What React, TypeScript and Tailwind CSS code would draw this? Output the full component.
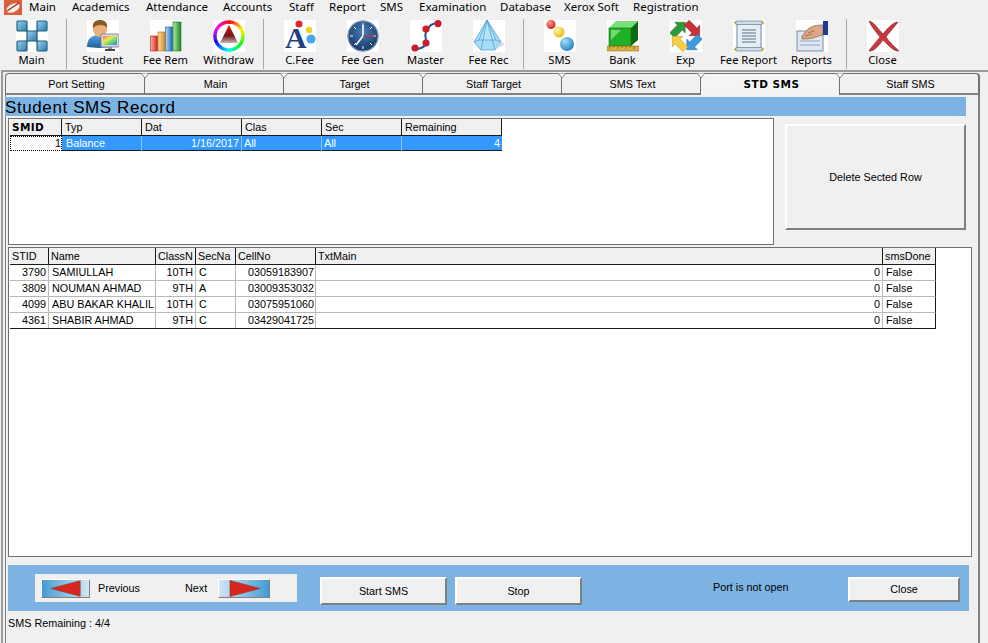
import React from "react";

const Box = ({ children }: { children: React.ReactNode }) => (
  <svg width="32" height="32" viewBox="0 0 32 32" className="block bg-white">
    {children}
  </svg>
);

const Sq = ({ x, y }: { x: number; y: number }) => (
  <rect x={x} y={y} width="10" height="10" rx="1" fill="url(#mainG)" stroke="#1d5f86" strokeWidth="1.2" />
);

const IconMain = () => (
  <Box>
    <defs>
      <linearGradient id="mainG" x1="0" y1="0" x2="1" y2="1">
        <stop offset="0" stopColor="#9fd0ea" />
        <stop offset="1" stopColor="#2a7ba8" />
      </linearGradient>
    </defs>
    <path d="M6 6L26 26M26 6L6 26" stroke="#8fb7cf" strokeWidth="3" />
    <Sq x={1} y={1} />
    <Sq x={21} y={1} />
    <Sq x={11} y={11} />
    <Sq x={1} y={21} />
    <Sq x={21} y={21} />
  </Box>
);

const IconStudent = () => (
  <Box>
    <defs>
      <linearGradient id="stuB" x1="0" y1="0" x2="0" y2="1">
        <stop offset="0" stopColor="#5aa5de" />
        <stop offset="1" stopColor="#1c5f9f" />
      </linearGradient>
      <linearGradient id="stuS" x1="0" y1="0" x2="1" y2="1">
        <stop offset="0" stopColor="#ff6a5a" />
        <stop offset="0.35" stopColor="#f5e84c" />
        <stop offset="0.65" stopColor="#57d87a" />
        <stop offset="1" stopColor="#5a6be0" />
      </linearGradient>
    </defs>
    <path d="M0 27C0 18 5 15 13 15C20 15 24 18 24 27L12 28Z" fill="url(#stuB)" />
    <ellipse cx="13" cy="9" rx="7" ry="8" fill="#e9b07c" />
    <path d="M6 8C5 2 9 0 13 0C18 0 21 3 20 8C18 4 10 4 6 8Z" fill="#8a5a2c" />
    <rect x="14" y="14" width="18" height="13" rx="1" fill="#d5dade" stroke="#6d7680" strokeWidth="0.8" />
    <rect x="16" y="16" width="14" height="9" fill="url(#stuS)" />
    <rect x="21" y="27" width="4" height="2" fill="#8b929a" />
    <rect x="18" y="29" width="10" height="2" fill="#40464c" />
  </Box>
);

const IconFeeRem = () => (
  <Box>
    <defs>
      <linearGradient id="b1" x1="0" x2="1" y1="0" y2="0"><stop offset="0" stopColor="#f6b4a8" /><stop offset="1" stopColor="#c8261c" /></linearGradient>
      <linearGradient id="b2" x1="0" x2="1" y1="0" y2="0"><stop offset="0" stopColor="#fbdca0" /><stop offset="1" stopColor="#e08a14" /></linearGradient>
      <linearGradient id="b3" x1="0" x2="1" y1="0" y2="0"><stop offset="0" stopColor="#b5dcf6" /><stop offset="1" stopColor="#1a67b8" /></linearGradient>
      <linearGradient id="b4" x1="0" x2="1" y1="0" y2="0"><stop offset="0" stopColor="#b8eaa8" /><stop offset="1" stopColor="#158a24" /></linearGradient>
    </defs>
    <rect x="0.5" y="16" width="7" height="15" fill="url(#b1)" stroke="#a3201a" strokeWidth="0.6" />
    <rect x="8" y="12" width="7" height="19" fill="url(#b2)" stroke="#b66f10" strokeWidth="0.6" />
    <rect x="15.5" y="7" width="7" height="24" fill="url(#b3)" stroke="#14508f" strokeWidth="0.6" />
    <rect x="23" y="2" width="8" height="29" fill="url(#b4)" stroke="#0f6c1b" strokeWidth="0.6" />
  </Box>
);

const hueSegs = Array.from({ length: 36 }, (_, i) => {
  const a0 = ((i * 10 - 91) * Math.PI) / 180;
  const a1 = (((i + 1) * 10 - 90) * Math.PI) / 180;
  const r = 14;
  return {
    d: `M${16 + r * Math.cos(a0)} ${16 + r * Math.sin(a0)}A${r} ${r} 0 0 1 ${16 + r * Math.cos(a1)} ${16 + r * Math.sin(a1)}`,
    c: `hsl(${i * 10},95%,50%)`,
  };
});

const IconWithdraw = () => (
  <Box>
    <defs>
      <linearGradient id="triG" x1="0" y1="0" x2="0" y2="1">
        <stop offset="0" stopColor="#e01010" />
        <stop offset="0.6" stopColor="#701818" />
        <stop offset="1" stopColor="#c8b8b8" />
      </linearGradient>
    </defs>
    {hueSegs.map((s, i) => (
      <path key={i} d={s.d} fill="none" stroke={s.c} strokeWidth="3.4" />
    ))}
    <path d="M16 5L25 23H7Z" fill="url(#triG)" />
  </Box>
);

const IconCFee = () => (
  <Box>
    <text x="1" y="28" fontFamily="'Liberation Serif', serif" fontWeight="700" fontSize="30" fill="#1f3f80">A</text>
    <circle cx="15" cy="4" r="3.5" fill="#e02828" />
    <circle cx="25" cy="10" r="3.2" fill="#f2d022" />
    <circle cx="27" cy="19" r="4.6" fill="#48a8e8" />
  </Box>
);

const IconFeeGen = () => (
  <Box>
    <defs>
      <radialGradient id="clk" cx="0.5" cy="0.35" r="0.7">
        <stop offset="0" stopColor="#4a7db8" />
        <stop offset="1" stopColor="#10305f" />
      </radialGradient>
    </defs>
    <circle cx="16" cy="16" r="15.5" fill="url(#clk)" />
    <circle cx="16" cy="16" r="15" fill="none" stroke="#9db0c4" strokeWidth="0.8" />
    <g stroke="#ffffff" strokeWidth="1">
      <path d="M16 3V6M16 26V29M3 16H6M26 16H29M7 7L9 9M25 7L23 9M7 25L9 23M25 25L23 23" />
    </g>
    <path d="M16 16V5M16 16L9 25" stroke="#ffffff" strokeWidth="1.6" />
    <path d="M16 16H28" stroke="#d83030" strokeWidth="1" />
  </Box>
);

const IconMaster = () => (
  <Box>
    <path d="M29 3C18 3 18 10 16 12C14 16 17 20 16 24C14 28 8 29 4 29" fill="none" stroke="#1f55a8" strokeWidth="2" />
    <circle cx="28" cy="3.6" r="3.6" fill="#c81e2a" />
    <circle cx="16" cy="9" r="3.6" fill="#c81e2a" />
    <circle cx="16" cy="23" r="3.6" fill="#c81e2a" />
    <circle cx="5" cy="28" r="3.6" fill="#c81e2a" />
  </Box>
);

const IconFeeRec = () => (
  <Box>
    <path d="M14 0L1 22L8 30H22L28 22Z" fill="#a9dcf5" stroke="#4ea3d8" strokeWidth="0.8" />
    <path d="M14 0L8 30M14 0L22 30M14 0L6 20H23L14 0" fill="#c8ecfb" fillOpacity="0.5" stroke="#4ea3d8" strokeWidth="0.8" />
    <path d="M1 22L6 20M28 22L23 20" stroke="#4ea3d8" strokeWidth="0.8" />
    <path d="M22 30L32 24L28 22Z" fill="#d8dde0" />
  </Box>
);

const IconSMS = () => (
  <Box>
    <defs>
      <radialGradient id="bR" cx="0.35" cy="0.3" r="0.8"><stop offset="0" stopColor="#ff9a8a" /><stop offset="1" stopColor="#c81818" /></radialGradient>
      <radialGradient id="bY" cx="0.35" cy="0.3" r="0.8"><stop offset="0" stopColor="#fff49a" /><stop offset="1" stopColor="#e8b408" /></radialGradient>
      <radialGradient id="bB" cx="0.35" cy="0.3" r="0.8"><stop offset="0" stopColor="#a8dcf8" /><stop offset="1" stopColor="#1878c0" /></radialGradient>
    </defs>
    <circle cx="7" cy="4.5" r="4.5" fill="url(#bR)" />
    <circle cx="15" cy="12" r="5.5" fill="url(#bY)" />
    <circle cx="23" cy="24" r="7" fill="url(#bB)" />
  </Box>
);

const IconBank = () => (
  <Box>
    <path d="M2 8L9 1H31L24 8Z" fill="#78e078" />
    <path d="M24 8L31 1V20L24 26Z" fill="#0a6a14" />
    <rect x="2" y="8" width="22" height="18" fill="#20b028" stroke="#0d6a16" strokeWidth="0.6" />
    <path d="M4 10H14L4 20Z" fill="#70dc70" />
    <rect x="0" y="26" width="32" height="5" fill="#d8b040" stroke="#8d6f18" strokeWidth="0.6" />
    <path d="M3 26V29M7 26V28M11 26V29M15 26V28M19 26V29M23 26V28M27 26V29" stroke="#6f5710" strokeWidth="0.7" />
  </Box>
);

const arrowD = "M0 -9.5L7.5 -2H3.5V9H-3.5V-2H-7.5Z";

const IconExp = () => (
  <Box>
    <path d={arrowD} transform="translate(8.5 9) rotate(45)" fill="#2f9a3a" stroke="#1e6a28" strokeWidth="0.5" />
    <path d={arrowD} transform="translate(23 9) rotate(135)" fill="#c8323a" stroke="#8e1f26" strokeWidth="0.5" />
    <path d={arrowD} transform="translate(23.5 23) rotate(225)" fill="#3d9ae0" stroke="#20689f" strokeWidth="0.5" />
    <path d={arrowD} transform="translate(9 23) rotate(-45)" fill="#f4d040" stroke="#b89a1c" strokeWidth="0.5" />
  </Box>
);

const IconFeeReport = () => (
  <Box>
    <rect x="4" y="3" width="24" height="26" fill="#e6eef6" stroke="#6d8aa6" strokeWidth="1" />
    <rect x="2" y="1" width="28" height="3.5" rx="1.7" fill="#cfdbe6" stroke="#6d8aa6" strokeWidth="0.8" />
    <rect x="2" y="27.5" width="28" height="3.5" rx="1.7" fill="#cfdbe6" stroke="#6d8aa6" strokeWidth="0.8" />
    <circle cx="2.5" cy="2.6" r="1.3" fill="#c8a83a" />
    <circle cx="29.5" cy="2.6" r="1.3" fill="#c8a83a" />
    <circle cx="2.5" cy="29.4" r="1.3" fill="#c8a83a" />
    <circle cx="29.5" cy="29.4" r="1.3" fill="#c8a83a" />
    <path d="M9 10H23M9 13H23M9 16H23M9 19H23M9 22H23" stroke="#5a7086" strokeWidth="1" />
  </Box>
);

const IconReports = () => (
  <Box>
    <rect x="1" y="11" width="26" height="20" fill="#dfe8f2" stroke="#6a7f96" strokeWidth="0.9" />
    <path d="M4 21H24M4 25H24" stroke="#8fa4ba" strokeWidth="1" />
    <path d="M6 16L12 9C16 6 20 5 27 5L27 15C22 16 20 17 17 18C13 19 10 19 6 19Z" fill="#d8a888" stroke="#8f6040" strokeWidth="0.7" />
    <path d="M12 13L18 11M9 16L16 14" stroke="#8f6040" strokeWidth="0.7" />
    <rect x="27" y="1" width="5" height="14" fill="#1c3c94" />
  </Box>
);

const IconClose = () => (
  <Box>
    <path d="M2 1C6 1 12 10 16 14C20 9 26 2 31 2C28 6 22 13 19 17C22 22 28 27 32 31C27 32 20 24 16 20C12 25 7 32 2 31C5 26 11 20 13 17C9 12 4 6 2 1Z" fill="#c8383c" stroke="#7e1e20" strokeWidth="0.6" />
  </Box>
);

const menus: [string, string][] = [
  ["Main", "w-[43px]"],
  ["Academics", "w-[74px]"],
  ["Attendance", "w-[77px]"],
  ["Accounts", "w-[66px]"],
  ["Staff", "w-[40px]"],
  ["Report", "w-[51px]"],
  ["SMS", "w-[39px]"],
  ["Examination", "w-[81px]"],
  ["Database", "w-[64px]"],
  ["Xerox Soft", "w-[69px]"],
  ["Registration", "w-[70px]"],
];

const tools: ([string, React.ReactNode] | "sep")[] = [
  ["Main", <IconMain />],
  "sep",
  ["Student", <IconStudent />],
  ["Fee Rem", <IconFeeRem />],
  ["Withdraw", <IconWithdraw />],
  "sep",
  ["C.Fee", <IconCFee />],
  ["Fee Gen", <IconFeeGen />],
  ["Master", <IconMaster />],
  ["Fee Rec", <IconFeeRec />],
  "sep",
  ["SMS", <IconSMS />],
  ["Bank", <IconBank />],
  ["Exp", <IconExp />],
  ["Fee Report", <IconFeeReport />],
  ["Reports", <IconReports />],
  "sep",
  ["Close", <IconClose />],
];

const tabs = ["Port Setting", "Main", "Target", "Staff Target", "SMS Text", "STD SMS", "Staff SMS"];

const g1Cols = "grid grid-cols-[52px_80px_100px_80px_80px_100px] w-[492px]";
const g2Cols = "grid grid-cols-[39px_107px_40px_40px_80px_567px_53px] w-[926px]";

const HCell = ({ children, className = "" }: { children: React.ReactNode; className?: string }) => (
  <div className={`h-[16px] bg-[#f0f0f0] border-r border-[#1a1a1a] px-[2px] leading-[16px] whitespace-nowrap overflow-hidden ${className}`}>
    {children}
  </div>
);

const RaisedBtn = ({ label, className }: { label: string; className: string }) => (
  <button className={`flex items-center justify-center shrink-0 bg-[#f0f0f0] border-t-2 border-l-2 border-t-white border-l-white border-r-2 border-b-2 border-r-[#808080] border-b-[#808080] text-[10.8px] text-black ${className}`}>
    {label}
  </button>
);

const ArrowBtn = ({ dir }: { dir: "l" | "r" }) => (
  <div className={`h-[19px] border-t border-l border-white border-r border-b border-r-[#808080] border-b-[#808080] flex items-center shrink-0 ${dir === "l" ? "w-[49px] bg-gradient-to-r from-[#3f9bd3] to-[#cfe6f7]" : "w-[52px] bg-gradient-to-r from-[#cfe6f7] to-[#3f9bd3]"}`}>
    <svg width="48" height="17" viewBox="0 0 48 17">
      {dir === "l" ? (
        <path d="M9 8.5L39 0.5V16.5Z" fill="#d9261c" stroke="#7e3a30" strokeWidth="0.6" />
      ) : (
        <path d="M11 0.5L41 8.5L11 16.5Z" fill="#d9261c" stroke="#7e3a30" strokeWidth="0.6" />
      )}
    </svg>
  </div>
);

const rows1 = [["3790", "SAMIULLAH", "10TH", "C", "03059183907"], ["3809", "NOUMAN AHMAD", "9TH", "A", "03009353032"], ["4099", "ABU BAKAR KHALIL", "10TH", "C", "03075951060"], ["4361", "SHABIR AHMAD", "9TH", "C", "03429041725"]];

export default function App() {
  return (
    <div className="w-[988px] h-[643px] overflow-hidden flex flex-col bg-[#f0f0f0] text-black font-['Liberation_Sans',Arial,sans-serif] text-[10.8px]">
      {/* menu bar */}
      <div className="h-[16px] shrink-0 flex items-start font-['Noto_Sans',sans-serif] text-[11.5px]">
        <div className="w-[29px] h-[16px] shrink-0 pl-[4px]">
          <svg width="18" height="15" viewBox="0 0 18 15" className="block">
            <rect width="18" height="15" fill="#d9603a" />
            <ellipse cx="9" cy="8" rx="7" ry="4" fill="#f6efe6" transform="rotate(-25 9 8)" />
            <path d="M3 11L15 3" stroke="#8c2a1a" strokeWidth="1.2" />
          </svg>
        </div>
        {menus.map(([m, w]) => (
          <span key={m} className={`shrink-0 leading-[14px] whitespace-nowrap ${w}`}>{m}</span>
        ))}
      </div>

      {/* toolbar */}
      <div className="h-[54px] shrink-0 flex pt-[4px] font-['Noto_Sans',sans-serif] text-[11.2px]">
        {tools.map((t, i) =>
          t === "sep" ? (
            <div key={i} className="w-[1px] h-[50px] ml-[3px] mr-[4px] -mt-[1px] bg-[#a8a8a8] shrink-0" />
          ) : (
            <div key={i} className="w-[63px] shrink-0 flex flex-col items-center">
              {t[1]}
              <span className="leading-[16px] whitespace-nowrap">{t[0]}</span>
            </div>
          )
        )}
      </div>

      {/* frame */}
      <div className="flex-1 min-h-0 flex flex-col ml-[1px] border-t-2 border-l-2 border-[#9a9a9a] pl-[2px]">
        <div className="h-[22px] mt-[1px] shrink-0 flex">
          {tabs.map((t, i) => {
            const active = t === "STD SMS";
            const last = i === tabs.length - 1;
            return (
              <div
                key={t}
                className={`relative h-[22px] flex items-center justify-center pl-[3px] pt-[1px] border-t border-l border-[#707070] ${last ? "w-[141px] border-r-2 rounded-tr-[4px]" : "w-[139px]"} ${i === 0 ? "rounded-tl-[4px]" : ""} ${active ? "bg-[#f4f4f4] border-b-0 font-bold tracking-[0.5px] font-['DejaVu_Sans',sans-serif] text-[10.5px]" : "border-b-2 border-b-[#808080] bg-[#f0f0f0]"}`}
              >
                {t}
                {i > 0 && (
                  <svg width="8" height="5" viewBox="0 0 8 5" className="absolute -top-[1px] -left-[4px]">
                    <path d="M0 0H8L4 5Z" fill="#ffffff" stroke="#808080" strokeWidth="1" />
                  </svg>
                )}
              </div>
            );
          })}
        </div>
        <div className="flex-1 min-h-0 w-[975px] flex flex-col border-l border-l-[#808080] border-r-2 border-r-[#808080] pt-[2px]">
          <div className="h-[19px] w-[961px] shrink-0 bg-[#7cb3e3] text-[17px] leading-[21px] tracking-[0.6px] whitespace-nowrap -ml-[1px]">
            Student SMS Record
          </div>

          <div className="flex shrink-0 mt-[2px] ml-[2px]">
            <div className="w-[766px] h-[127px] bg-white border border-[#707070] pl-[1px] shrink-0">
              <div className={`${g1Cols} border-b border-[#1a1a1a]`}>
                <HCell className="font-bold tracking-[0.4px] font-['DejaVu_Sans',sans-serif] text-[10.5px]">SMID</HCell>
                <HCell className="pl-[3px]">Typ</HCell>
                <HCell className="pl-[3px]">Dat</HCell>
                <HCell className="pl-[3px]">Clas</HCell>
                <HCell className="pl-[3px]">Sec</HCell>
                <HCell className="pl-[3px]">Remaining</HCell>
              </div>
              <div className={`${g1Cols} h-[15px] leading-[15px] border-b border-[#1a1a1a] bg-[#3399ff] text-white`}>
                <div className="bg-white text-black text-right pr-[1px] outline-1 -outline-offset-1 outline-dotted outline-black">1</div>
                <div className="pl-[4px] border-r border-[#8cc4fa]">Balance</div>
                <div className="text-right pr-[2px] border-r border-[#8cc4fa]">1/16/2017</div>
                <div className="pl-[2px] border-r border-[#8cc4fa]">All</div>
                <div className="pl-[2px] border-r border-[#8cc4fa]">All</div>
                <div className="text-right pr-[2px]">4</div>
              </div>
            </div>
            <RaisedBtn label="Delete Sected Row" className="w-[181px] h-[106px] ml-[11px] mt-[6px]" />
          </div>

          <div className="w-[964px] h-[310px] shrink-0 mt-[2px] ml-[2px] bg-white border border-[#707070] pl-[1px]">
            <div className={`${g2Cols} border-b border-[#1a1a1a]`}>
              {["STID", "Name", "ClassN", "SecNa", "CellNo", "TxtMain", "smsDone"].map((h) => (
                <HCell key={h}>{h}</HCell>
              ))}
            </div>
            {rows1.map((r, i) => (
              <div key={r[0]} className={`${g2Cols} h-[16px] leading-[15px] border-b ${i === 3 ? "border-[#1a1a1a]" : "border-[#b8b8b8]"} border-r border-r-[#1a1a1a]`}>
                <div className="text-right pr-[2px] border-r border-[#b8b8b8]">{r[0]}</div>
                <div className="pl-[3px] border-r border-[#b8b8b8] whitespace-nowrap overflow-hidden">{r[1]}</div>
                <div className="text-right pr-[2px] border-r border-[#b8b8b8]">{r[2]}</div>
                <div className="pl-[3px] border-r border-[#b8b8b8]">{r[3]}</div>
                <div className="text-right pr-[1px] border-r border-[#b8b8b8]">{r[4]}</div>
                <div className="text-right pr-[2px] border-r border-[#b8b8b8]">0</div>
                <div className="pl-[3px]">False</div>
              </div>
            ))}
          </div>

          <div className="w-[961px] h-[46px] shrink-0 mt-[8px] ml-[2px] bg-[#7cb3e3] flex items-start">
            <div className="ml-[27px] mt-[9px] w-[262px] h-[28px] bg-[#f0f0f0] shrink-0 flex items-center pl-[6px]">
              <ArrowBtn dir="l" />
              <span className="ml-[8px] w-[87px]">Previous</span>
              <span className="w-[33px]">Next</span>
              <ArrowBtn dir="r" />
            </div>
            <RaisedBtn label="Start SMS" className="ml-[23px] mt-[12px] w-[127px] h-[28px]" />
            <RaisedBtn label="Stop" className="ml-[8px] mt-[12px] w-[127px] h-[28px]" />
            <span className="ml-[131px] mt-[15px] w-[75px] whitespace-nowrap shrink-0 leading-[14px]">Port is not open</span>
            <RaisedBtn label="Close" className="ml-[60px] mt-[12px] w-[112px] h-[25px]" />
          </div>

          <div className="mt-[5px] ml-[2px] leading-[14px] whitespace-nowrap">SMS Remaining : 4/4</div>
        </div>
      </div>
    </div>
  );
}
